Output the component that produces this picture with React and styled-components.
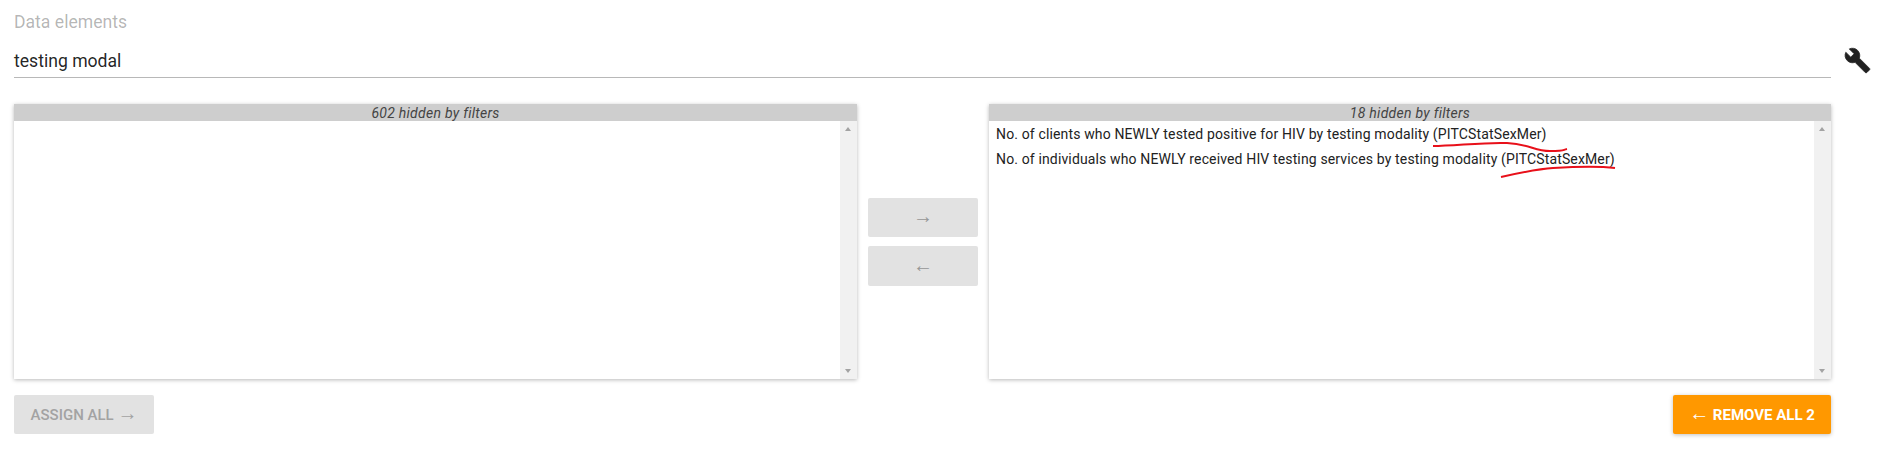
import React from 'react';
import styled, { createGlobalStyle } from 'styled-components';

const Global = createGlobalStyle`
	html, body { margin: 0; padding: 0; background: #fff; }
	body { font-family: Roboto, "Liberation Sans", sans-serif; }
	* { box-sizing: border-box; }
`;

const Page = styled.div`
	width: 1880px;
	height: 451px;
	padding: 0 49px 0 14px;
	overflow: hidden;
`;

const FilterRow = styled.div`
	position: relative;
	height: 78px;
	padding-top: 12px;
	border-bottom: 1px solid #b8b8b8;
`;

const FilterLabel = styled.div`
	font-size: 17.6px;
	line-height: 20px;
	color: rgba(0, 0, 0, 0.3);
`;

const FilterValue = styled.div`
	margin-top: 19px;
	font-size: 17.6px;
	line-height: 20px;
	color: rgba(0, 0, 0, 0.87);
`;

const WrenchButton = styled.div`
	position: absolute;
	top: 47px;
	right: -40px;
	width: 27px;
	height: 27px;
	color: #212121;
`;

const Transfer = styled.div`
	display: grid;
	grid-template-columns: 843px 132px 842px;
	margin-top: 26px;
	height: 275px;
`;

const Panel = styled.div`
	position: relative;
	display: flex;
	flex-direction: column;
	background: #fff;
	box-shadow: 0 1px 4px rgba(0, 0, 0, 0.28);
`;

const PanelHeader = styled.div`
	height: 17px;
	background: #cecece;
	font-size: 14px;
	font-style: italic;
	letter-spacing: 0.27px;
	line-height: 18px;
	text-align: center;
	color: #444;
`;

const PanelBody = styled.div`
	flex: 1;
	display: flex;
	min-height: 0;
`;

const Options = styled.div`
	flex: 1;
	padding-top: 1px;
`;

const Option = styled.div`
	padding: 0 7px;
	height: 25px;
	font-size: 14px;
	letter-spacing: 0.14px;
	line-height: 25px;
	color: #222;
`;

const Scrollbar = styled.div`
	position: relative;
	width: 17px;
	background: #f1f1f1;
`;

const ScrollArrow = styled.div`
	position: absolute;
	left: 5px;
	${(props) => (props.$down ? 'bottom: 6px;' : 'top: 6px;')}
	border-left: 3.5px solid transparent;
	border-right: 3.5px solid transparent;
	${(props) => (props.$down ? 'border-top: 4px solid #a3a3a3;' : 'border-bottom: 4px solid #a3a3a3;')}
`;

const MoveColumn = styled.div`
	display: flex;
	flex-direction: column;
	align-items: center;
	gap: 9px;
	padding-top: 94px;
`;

const MoveButton = styled.div`
	width: 110px;
	height: ${(props) => props.$height}px;
	border-radius: 2px;
	background: #e2e2e2;
	color: #969696;
	line-height: ${(props) => props.$height + 1}px;
	text-align: center;
`;

const Arrow = styled.span`
	font-family: "Liberation Sans", sans-serif;
	font-weight: 400;
	font-size: 20px;
	line-height: 0;
`;

const Footer = styled.div`
	display: flex;
	justify-content: space-between;
	margin-top: 16px;
`;

const ActionButton = styled.div`
	height: 39px;
	padding: 0 16px;
	min-width: ${(props) => props.$width}px;
	border-radius: 2px;
	font-size: 15px;
	font-weight: ${(props) => (props.$primary ? 700 : 500)};
	line-height: 40px;
	text-align: center;
	white-space: nowrap;
	background: ${(props) => (props.$primary ? '#ff9800' : '#e2e2e2')};
	color: ${(props) => (props.$primary ? '#fff' : '#a3a3a3')};
	box-shadow: ${(props) => (props.$primary ? '0 1px 4px rgba(0, 0, 0, 0.25)' : 'none')};
`;

const Scribble = styled.svg`
	position: absolute;
	left: 0;
	top: 0;
	width: 842px;
	height: 275px;
	pointer-events: none;
`;

const Wrench = () => (
	<svg viewBox="0 0 24 24" width="27" height="27" fill="currentColor" stroke="currentColor" strokeWidth="0.7">
		<path d="M22.7 19l-9.1-9.1c.9-2.3.4-5-1.5-6.9-2-2-5-2.4-7.4-1.3L9 6 6 9 1.6 4.7C.4 7.1.9 10.1 2.9 12.1c1.9 1.9 4.6 2.4 6.9 1.5l9.1 9.1c.4.4 1 .4 1.4 0l2.3-2.3c.5-.4.5-1.1.1-1.4z" />
	</svg>
);

const ListPanel = ({ title, items = [], children }) => (
	<Panel>
		<PanelHeader>{title}</PanelHeader>
		<PanelBody>
			<Options>
				{items.map((item) => (
					<Option key={item}>{item}</Option>
				))}
			</Options>
			<Scrollbar>
				<ScrollArrow />
				<ScrollArrow $down />
			</Scrollbar>
		</PanelBody>
		{children}
	</Panel>
);

const selected = [
	'No. of clients who NEWLY tested positive for HIV by testing modality (PITCStatSexMer)',
	'No. of individuals who NEWLY received HIV testing services by testing modality (PITCStatSexMer)',
];

export default function App() {
	return (
		<Page>
			<Global />
			<FilterRow>
				<FilterLabel>Data elements</FilterLabel>
				<FilterValue>testing modal</FilterValue>
				<WrenchButton>
					<Wrench />
				</WrenchButton>
			</FilterRow>
			<Transfer>
				<ListPanel title="602 hidden by filters" />
				<MoveColumn>
					<MoveButton $height={39}><Arrow>→</Arrow></MoveButton>
					<MoveButton $height={40}><Arrow>←</Arrow></MoveButton>
				</MoveColumn>
				<ListPanel title="18 hidden by filters" items={selected}>
					<Scribble viewBox="0 0 842 275">
						<path d="M444 42 C 465 42, 495 38, 518 39 S 545 47, 561 47 S 573 46, 578 45" fill="none" stroke="#e8101a" strokeWidth="2" />
						<path d="M512 73 C 530 69, 548 65, 564 64 S 610 62, 626 64" fill="none" stroke="#e8101a" strokeWidth="2" />
					</Scribble>
				</ListPanel>
			</Transfer>
			<Footer>
				<ActionButton $width={140}>ASSIGN ALL <Arrow>→</Arrow></ActionButton>
				<ActionButton $width={158} $primary><Arrow>←</Arrow> REMOVE ALL 2</ActionButton>
			</Footer>
		</Page>
	);
}
